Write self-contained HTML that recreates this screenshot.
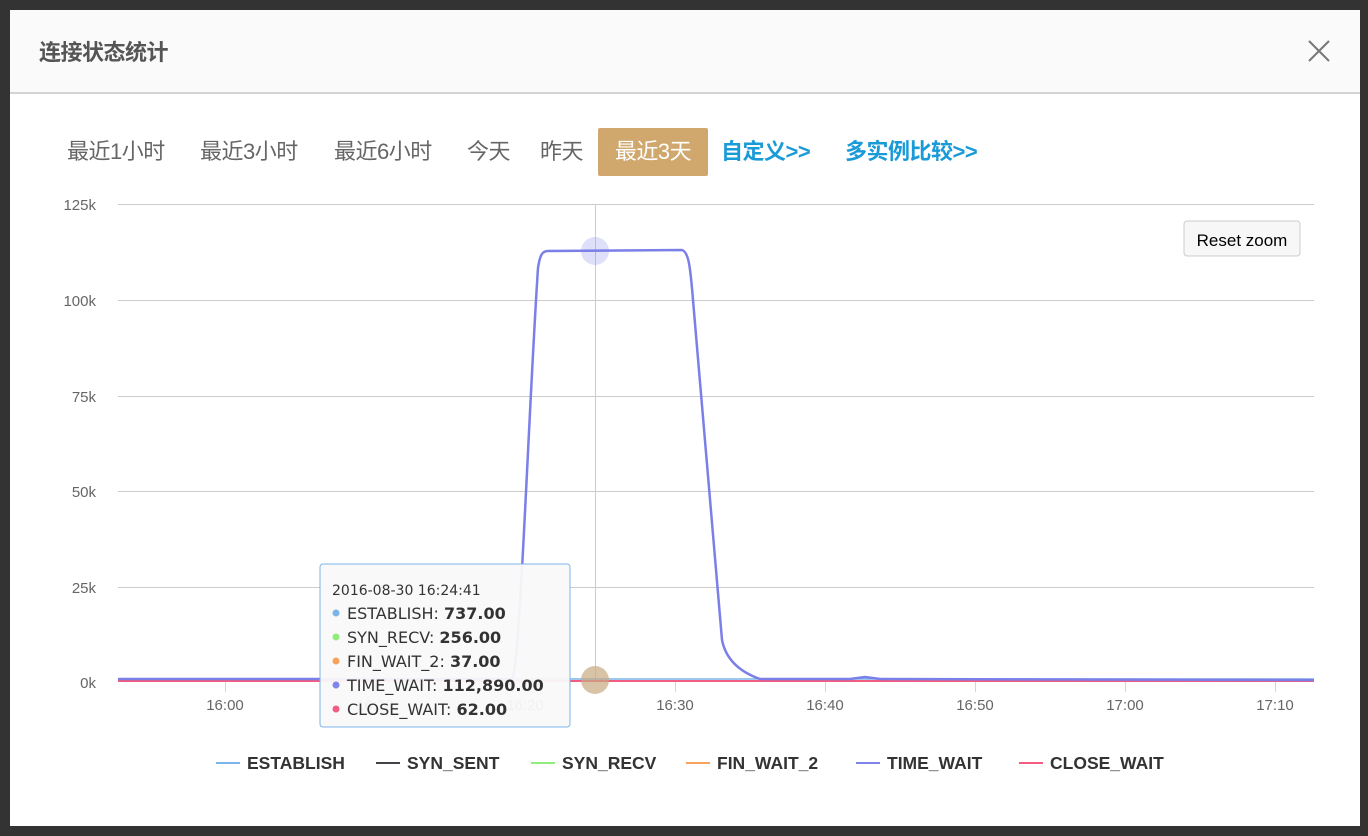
<!DOCTYPE html>
<html><head><meta charset="utf-8"><style>
body{margin:0;width:1368px;height:836px;background:#333;position:relative;overflow:hidden;font-family:"Liberation Sans","Noto Sans CJK SC",sans-serif}
.m{position:absolute;left:10px;top:10px;width:1350px;height:816px;background:#fff}
.h{height:82px;background:#fafafa;border-bottom:2px solid #d4d4d4;position:relative}
.h .t{position:absolute;left:29px;top:25px;font-size:22px;color:#555;font-weight:bold;letter-spacing:-0.5px}
.tb{position:absolute;top:138px;font-size:22px;color:#666;line-height:28px;white-space:nowrap;letter-spacing:-0.5px}
.a{background:#d0a86e;color:#fff;border-radius:2px;top:128px;left:598px;width:110px;height:48px;line-height:48px;text-align:center}
.l{color:#1a9bd7;font-weight:bold}
</style></head><body>
<div class="m">
<div class="h"><div class="t">连接状态统计</div>
<svg style="position:absolute;left:1297px;top:29px" width="24" height="24"><path d="M2 2L22 22M22 2L2 22" stroke="#777" stroke-width="2"/></svg></div>
</div>
<div class="tb" style="left:67px">最近1小时</div>
<div class="tb" style="left:200px">最近3小时</div>
<div class="tb" style="left:334px">最近6小时</div>
<div class="tb" style="left:467px">今天</div>
<div class="tb" style="left:540px">昨天</div>
<div class="tb a">最近3天</div>
<div class="tb l" style="left:721px">自定义&gt;&gt;</div>
<div class="tb l" style="left:845px">多实例比较&gt;&gt;</div>
<svg style="position:absolute;left:0;top:0" width="1368" height="836" font-family="Liberation Sans, DejaVu Sans, sans-serif">
<g stroke="#ccc" stroke-width="1">
<line x1="118" x2="1314" y1="204.5" y2="204.5"/><line x1="118" x2="1314" y1="300.5" y2="300.5"/><line x1="118" x2="1314" y1="396.5" y2="396.5"/><line x1="118" x2="1314" y1="491.5" y2="491.5"/><line x1="118" x2="1314" y1="587.5" y2="587.5"/>
<line x1="595.5" x2="595.5" y1="204" y2="682"/>
</g>
<g stroke="#ccd6eb"><line x1="225.5" x2="225.5" y1="682" y2="692"/><line x1="375.5" x2="375.5" y1="682" y2="692"/><line x1="525.5" x2="525.5" y1="682" y2="692"/><line x1="675.5" x2="675.5" y1="682" y2="692"/><line x1="825.5" x2="825.5" y1="682" y2="692"/><line x1="975.5" x2="975.5" y1="682" y2="692"/><line x1="1125.5" x2="1125.5" y1="682" y2="692"/><line x1="1275.5" x2="1275.5" y1="682" y2="692"/></g>
<g font-size="15" fill="#666" text-anchor="end"><text x="96" y="210">125k</text><text x="96" y="306">100k</text><text x="96" y="402">75k</text><text x="96" y="497">50k</text><text x="96" y="593">25k</text><text x="96" y="688">0k</text></g>
<g font-size="15" fill="#666" text-anchor="middle"><text x="225" y="710">16:00</text><text x="375" y="710">16:10</text><text x="525" y="710">16:20</text><text x="675" y="710">16:30</text><text x="825" y="710">16:40</text><text x="975" y="710">16:50</text><text x="1125" y="710">17:00</text><text x="1275" y="710">17:10</text></g>
<line x1="118" x2="1314" y1="681" y2="681" stroke="#f15c80" stroke-width="2"/>
<line x1="118" x2="1314" y1="679" y2="679" stroke="#7cb5ec" stroke-width="1.5"/>
<path d="M118 679L512 679C520 670 528 420 538 268C540 255 542 251 548 251L682 250C688 252 690 262 693 300L722 640C726 660 740 672 760 679L850 679L865 677L880 679L1314 680" fill="none" stroke="#7b7fe8" stroke-width="2.5"/>
<circle cx="595" cy="251" r="14" fill="#7b7fe8" opacity="0.25"/>
<circle cx="595" cy="680" r="14" fill="#c8aa80" opacity="0.7"/>
<rect x="1184" y="221" width="116" height="35" rx="3" fill="#f7f7f7" stroke="#ccc"/>
<text x="1242" y="246" font-size="17" fill="#000" text-anchor="middle">Reset zoom</text>
<rect x="320" y="564" width="250" height="163" rx="3" fill="#f9f9f9" fill-opacity="0.95" stroke="#7cb5ec"/>
<text x="332" y="595" font-size="14" fill="#333" font-family="DejaVu Sans, sans-serif">2016-08-30 16:24:41</text>
<g font-size="16" fill="#333" font-family="DejaVu Sans, sans-serif">
<circle cx="336" cy="613" r="3.5" fill="#7cb5ec"/><text x="347" y="619">ESTABLISH: <tspan font-weight="bold">737.00</tspan></text>
<circle cx="336" cy="637" r="3.5" fill="#90ed7d"/><text x="347" y="643">SYN_RECV: <tspan font-weight="bold">256.00</tspan></text>
<circle cx="336" cy="661" r="3.5" fill="#f7a35c"/><text x="347" y="667">FIN_WAIT_2: <tspan font-weight="bold">37.00</tspan></text>
<circle cx="336" cy="685" r="3.5" fill="#8085e9"/><text x="347" y="691">TIME_WAIT: <tspan font-weight="bold">112,890.00</tspan></text>
<circle cx="336" cy="709" r="3.5" fill="#f15c80"/><text x="347" y="715">CLOSE_WAIT: <tspan font-weight="bold">62.00</tspan></text>
</g>
<g font-size="17.5" font-weight="bold" fill="#333" stroke-width="2">
<line x1="216" x2="240" y1="763" y2="763" stroke="#7cb5ec"/><text x="247" y="769">ESTABLISH</text>
<line x1="376" x2="400" y1="763" y2="763" stroke="#434348"/><text x="407" y="769">SYN_SENT</text>
<line x1="531" x2="555" y1="763" y2="763" stroke="#90ed7d"/><text x="562" y="769">SYN_RECV</text>
<line x1="686" x2="710" y1="763" y2="763" stroke="#f7a35c"/><text x="717" y="769">FIN_WAIT_2</text>
<line x1="856" x2="880" y1="763" y2="763" stroke="#8085e9"/><text x="887" y="769">TIME_WAIT</text>
<line x1="1019" x2="1043" y1="763" y2="763" stroke="#f15c80"/><text x="1050" y="769">CLOSE_WAIT</text>
</g>
</svg>
</body></html>
